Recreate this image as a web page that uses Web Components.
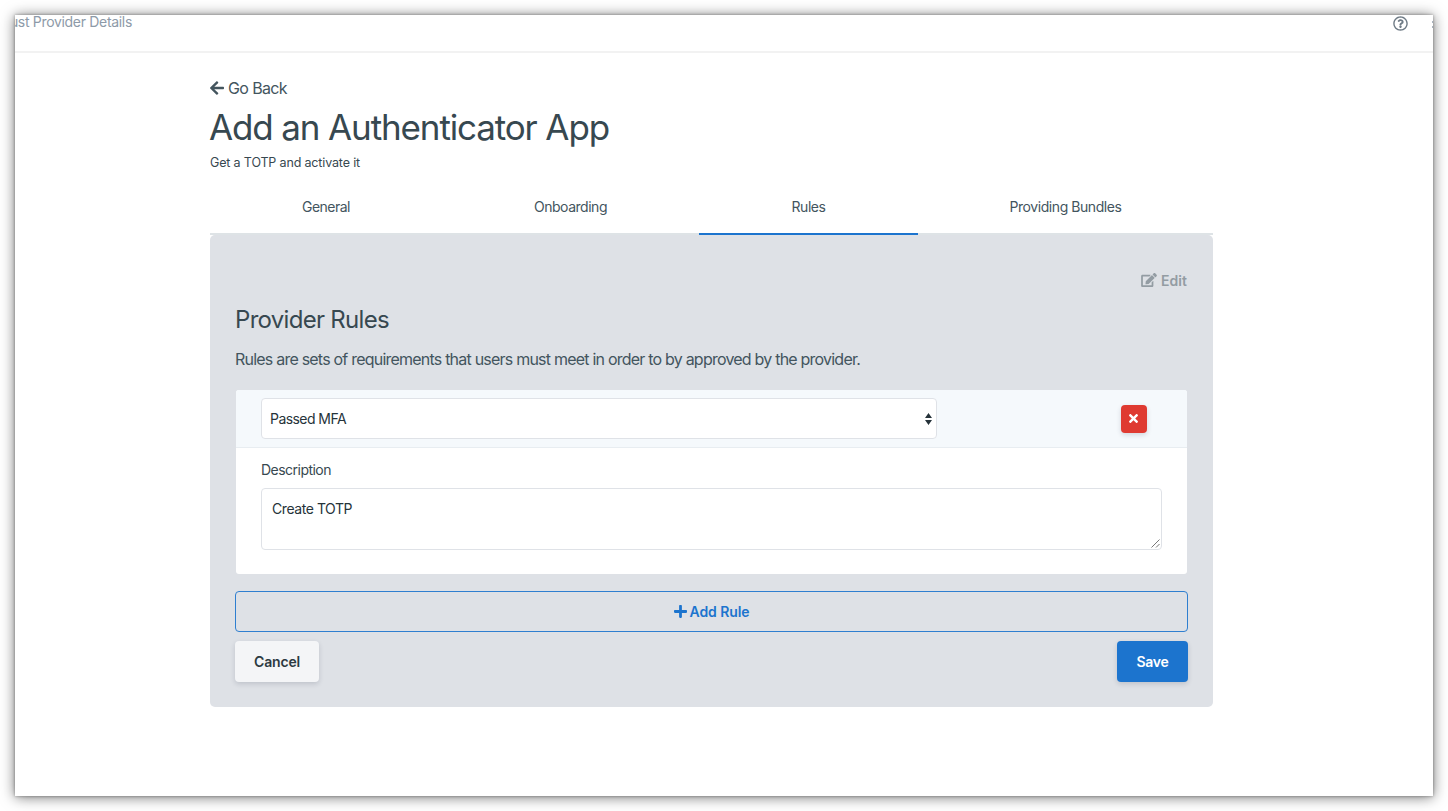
<!DOCTYPE html>
<html lang="en">
<head>
<meta charset="utf-8">
<title>Trust Provider Details</title>
<style>
html, body { margin: 0; height: 100%; background: #fff; overflow: hidden; }
body { font-family: Inter, "Liberation Sans", sans-serif; color: #374850; }
</style>
</head>
<body>
<app-window>
  <app-header slot="header"></app-header>
  <page-heading></page-heading>
  <tab-bar></tab-bar>
  <rules-panel>
    <rule-card></rule-card>
  </rules-panel>
</app-window>
<script>
const define = (name, html, setup) => {
  const template = document.createElement('template');
  template.innerHTML = '<style>:host,*{box-sizing:border-box}</style>' + html;
  customElements.define(name, class extends HTMLElement {
    connectedCallback() {
      if (this.shadowRoot) return;
      this.attachShadow({ mode: 'open' }).append(template.content.cloneNode(true));
      if (setup) setup(this);
    }
  });
};

/* A line of text tracked to fill the width given in "w". */
define('text-line', '<style>:host{display:inline-block;white-space:nowrap}span{display:inline-block}</style><span><slot></slot></span>', el => {
  const w = Number(el.getAttribute('w'));
  const span = el.shadowRoot.querySelector('span');
  const natural = span.getBoundingClientRect().width;
  el.style.width = w + 'px';
  span.style.letterSpacing = (w - natural) / el.textContent.length + 'px';
});

const ICONS = {
  back: ['0 0 448 512', 'M257.5 445.1l-22.2 22.2c-9.4 9.4-24.6 9.4-33.9 0L7 273c-9.4-9.4-9.4-24.6 0-33.9L201.4 44.7c9.4-9.4 24.6-9.4 33.9 0l22.2 22.2c9.5 9.5 9.3 25-.4 34.3L136.6 216H424c13.3 0 24 10.7 24 24v32c0 13.3-10.7 24-24 24H136.6l120.5 114.8c9.8 9.3 10 24.8.4 34.3z'],
  plus: ['0 0 448 512', 'M416 208H272V64c0-17.67-14.33-32-32-32h-32c-17.67 0-32 14.33-32 32v144H32c-17.67 0-32 14.33-32 32v32c0 17.67 14.33 32 32 32h144v144c0 17.67 14.33 32 32 32h32c17.67 0 32-14.33 32-32V304h144c17.67 0 32-14.33 32-32v-32c0-17.67-14.33-32-32-32z'],
  times: ['0 0 352 512', 'M242.72 256l100.07-100.07c12.28-12.28 12.28-32.19 0-44.48l-22.24-22.24c-12.28-12.28-32.19-12.28-44.48 0L176 189.28 75.93 89.21c-12.28-12.28-32.19-12.28-44.48 0L9.21 111.45c-12.28 12.28-12.28 32.19 0 44.48L109.28 256 9.21 356.07c-12.28 12.28-12.28 32.19 0 44.48l22.24 22.24c12.28 12.28 32.2 12.28 44.48 0L176 322.72l100.07 100.07c12.28 12.28 32.2 12.28 44.48 0l22.24-22.24c12.28-12.28 12.28-32.19 0-44.48L242.72 256z'],
  edit: ['0 0 576 512', 'M402.6 83.2l90.2 90.2c3.8 3.8 3.8 10 0 13.8L274.4 405.6l-92.8 10.3c-12.4 1.4-22.9-9.1-21.5-21.5l10.3-92.8L388.8 83.2c3.8-3.8 10-3.8 13.8 0zm162-22.9l-48.8-48.8c-15.2-15.2-39.9-15.2-55.2 0l-35.4 35.4c-3.8 3.8-3.8 10 0 13.8l90.2 90.2c3.8 3.8 10 3.8 13.8 0l35.4-35.4c15.2-15.3 15.2-40 0-55.2zM384 346.2V448H64V128h229.8c3.2 0 6.2-1.3 8.5-3.5l40-40c7.6-7.6 2.2-20.5-8.5-20.5H48C21.5 64 0 85.5 0 112v352c0 26.5 21.5 48 48 48h352c26.5 0 48-21.5 48-48V306.2c0-10.7-12.9-16-20.5-8.5l-40 40c-2.2 2.3-3.5 5.3-3.5 8.5z'],
  help: ['0 0 512 512', 'M256 8C119.043 8 8 119.083 8 256c0 136.997 111.043 248 248 248s248-111.003 248-248C504 119.083 392.957 8 256 8zm0 448c-110.532 0-200-89.431-200-200 0-110.495 89.472-200 200-200 110.491 0 200 89.471 200 200 0 110.53-89.431 200-200 200zm107.244-255.2c0 67.052-72.421 68.084-72.421 92.863V300c0 6.627-5.373 12-12 12h-45.647c-6.627 0-12-5.373-12-12v-8.659c0-35.745 27.1-50.034 47.579-61.516 17.561-9.845 28.324-16.541 28.324-29.579 0-17.246-21.999-28.693-39.784-28.693-23.189 0-33.894 10.977-48.942 29.969-4.057 5.12-11.46 6.071-16.666 2.124l-27.824-21.098c-5.107-3.872-6.251-11.066-2.644-16.363C184.846 131.491 214.94 112 261.794 112c49.071 0 101.45 38.304 101.45 88.8zM298 368c0 23.159-18.841 42-42 42s-42-18.841-42-42 18.841-42 42-42 42 18.841 42 42z']
};
define('ui-icon', '<style>:host{display:inline-flex;flex:none}svg{display:block;width:100%;height:100%;fill:currentColor}</style><svg><path/></svg>', el => {
  const [box, d] = ICONS[el.getAttribute('name')];
  const svg = el.shadowRoot.querySelector('svg');
  svg.setAttribute('viewBox', box);
  svg.firstElementChild.setAttribute('d', d);
});

define('app-window', `<style>
:host{display:block;margin:0;padding:15px;height:811px;overflow:hidden}
.win{width:1418px;height:781px;background:#fff;box-shadow:0 0 3px rgba(0,0,0,.35),0 1px 13px rgba(0,0,0,.55)}
main{width:1003px;margin:23px 0 0 195px}
</style><div class="win"><slot name="header"></slot><main><slot></slot></main></div>`);

define('app-header', `<style>
:host{display:flex;justify-content:space-between;height:38px;overflow:hidden;border-bottom:2px solid #f2f2f2;color:#8d9aa8;font-size:14px;line-height:16px}
.crumb{margin:-1px 0 0 -18px}
.right{display:flex;width:40px;overflow:hidden;color:#6f7b86}
.right ui-icon{width:15px;height:15px;margin-top:1px}
/* overflow menu: three dots at the window's edge */
.more{display:flex;flex-direction:column;gap:3px;margin:6px 0 0 24px}
.more i{width:2px;height:2px;background:#8d9aa8;border-radius:1px}
</style><text-line class="crumb" w="135">Trust Provider Details</text-line>
<div class="right"><ui-icon name="help"></ui-icon><div class="more"><i></i><i></i></div></div>`);

define('page-heading', `<style>
:host{display:flex;flex-direction:column;align-items:flex-start}
.back{display:flex;align-items:center;gap:4px;height:24px;font-size:16px;color:#43555e}
.back ui-icon{width:14px;height:16px}
h1{margin:5px 0 4px -1px;font-size:35px;font-weight:400;line-height:44px;height:44px}
p{margin:0;font-size:12.5px;line-height:20px;height:20px}
</style>
<div class="back"><ui-icon name="back"></ui-icon><text-line w="59">Go Back</text-line></div>
<h1><text-line w="400">Add an Authenticator App</text-line></h1>
<p><text-line w="150">Get a TOTP and activate it</text-line></p>`);

define('tab-bar', `<style>
:host{display:grid;grid-template-columns:232px 257px 219px 295px;height:54px;margin-top:8px;font-size:14px;color:#43555e}
div{text-align:center;line-height:20px;padding-top:16px;border-bottom:2px solid #dee3e6}
.on{border-color:#1c74ce}
</style><div><text-line w="48">General</text-line></div><div><text-line w="73">Onboarding</text-line></div><div class="on"><text-line w="34">Rules</text-line></div><div><text-line w="112">Providing Bundles</text-line></div>`);

define('rules-panel', `<style>
:host{display:block;height:472px;background:#dee1e6;border-radius:5px;padding:35px 25px 0}
.edit{display:flex;justify-content:flex-end;align-items:center;gap:4px;height:20px;padding-right:1px;font-size:14px;font-weight:600;color:#939ca3}
.edit ui-icon{width:16px;height:14px}
h2{margin:15px 0 0;font-size:24px;font-weight:400;line-height:30px;height:30px}
p{margin:12px 0 19px;font-size:16px;line-height:24px;height:24px;color:#43555e}
.add{display:flex;align-items:center;justify-content:center;gap:3px;height:41px;margin-top:17px;border:1px solid #2f7fd0;border-radius:4px;color:#1c74ce;font-size:14px;font-weight:600}
.add ui-icon{width:13px;height:15px}
footer{display:flex;justify-content:space-between;margin-top:9px}
.btn{height:41px;line-height:41px;text-align:center;border-radius:4px;font-size:14px;font-weight:600;box-shadow:0 2px 5px rgba(30,40,60,.16)}
.cancel{width:84px;background:#f4f5f7;color:#2c3a41}
.save{width:71px;background:#1c74ce;color:#fff}
</style>
<div class="edit"><ui-icon name="edit"></ui-icon><text-line w="26">Edit</text-line></div>
<h2><text-line w="154">Provider Rules</text-line></h2>
<p><text-line w="625">Rules are sets of requirements that users must meet in order to by approved by the provider.</text-line></p>
<slot></slot>
<div class="add"><ui-icon name="plus"></ui-icon><text-line w="60">Add Rule</text-line></div>
<footer><div class="btn cancel"><text-line w="46">Cancel</text-line></div><div class="btn save"><text-line w="32">Save</text-line></div></footer>`);

define('rule-card', `<style>
:host{display:block;height:184px;margin:0 1px;background:#fff;border-radius:3px;overflow:hidden;font-size:14px}
header{display:flex;justify-content:space-between;align-items:center;height:58px;padding:0 40px 0 25px;background:#f5f9fc;border-bottom:1px solid #e8edf1}
.select{display:flex;align-items:center;justify-content:space-between;width:676px;height:41px;padding:0 4px 0 8px;border:1px solid #dfe2e7;border-radius:4px;background:#fff;color:#26333a}
.select svg{width:7px;height:12px;display:block}
.del{display:flex;align-items:center;justify-content:center;width:26px;height:28px;border-radius:4px;background:#df3a31;color:#fff;box-shadow:0 2px 5px rgba(30,40,60,.16)}
.del ui-icon{width:9px;height:13px;margin:0 1px 1px 0}
.body{padding:12px 25px 0}
.label{display:block;height:20px;line-height:20px}
.area{display:flex;justify-content:space-between;height:62px;margin-top:8px;padding:10px 1px 1px 10px;border:1px solid #dfe2e7;border-radius:4px;color:#26333a;line-height:20px}
.area svg{width:9px;height:9px;align-self:flex-end;stroke:#777;fill:none}
</style>
<header><div class="select"><text-line w="76">Passed MFA</text-line><svg viewBox="0 0 7 12"><path fill="#26333a" d="M3.5 0L7 5H0zM0 7h7l-3.500 5z"/></svg></div>
<div class="del"><ui-icon name="times"></ui-icon></div></header>
<div class="body"><text-line class="label" w="70">Description</text-line>
<div class="area"><text-line w="80">Create TOTP</text-line><svg viewBox="0 0 9 9"><path d="M.5 8.500l8-8M5 8.500l3.500-3.500"/></svg></div></div>`);
</script>
</body>
</html>
